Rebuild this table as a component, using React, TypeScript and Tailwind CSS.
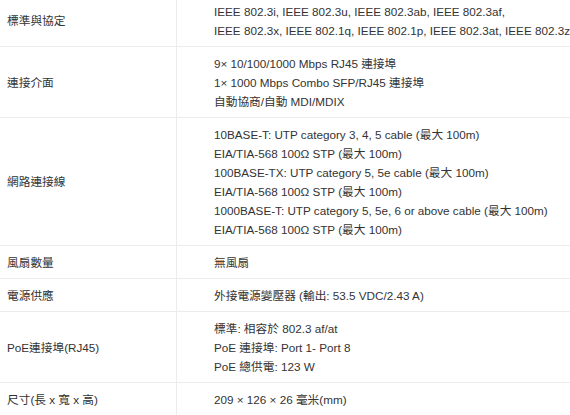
const ROWS = [
  {
    label: '標準與協定',
    lines: [
      'IEEE 802.3i, IEEE 802.3u, IEEE 802.3ab, IEEE 802.3af,',
      'IEEE 802.3x, IEEE 802.1q, IEEE 802.1p, IEEE 802.3at, IEEE 802.3z',
    ],
  },
  {
    label: '連接介面',
    lines: [
      '9× 10/100/1000 Mbps RJ45 連接埠',
      '1× 1000 Mbps Combo SFP/RJ45 連接埠',
      '自動協商/自動 MDI/MDIX',
    ],
  },
  {
    label: '網路連接線',
    lines: [
      '10BASE-T: UTP category 3, 4, 5 cable (最大 100m)',
      'EIA/TIA-568 100Ω STP (最大 100m)',
      '100BASE-TX: UTP category 5, 5e cable (最大 100m)',
      'EIA/TIA-568 100Ω STP (最大 100m)',
      '1000BASE-T: UTP category 5, 5e, 6 or above cable (最大 100m)',
      'EIA/TIA-568 100Ω STP (最大 100m)',
    ],
  },
  { label: '風扇數量', lines: ['無風扇'] },
  { label: '電源供應', lines: ['外接電源變壓器 (輸出: 53.5 VDC/2.43 A)'] },
  {
    label: 'PoE連接埠(RJ45)',
    lines: ['標準: 相容於 802.3 af/at', 'PoE 連接埠: Port 1- Port 8', 'PoE 總供電: 123 W'],
  },
  { label: '尺寸(長 x 寬 x 高)', lines: ['209 × 126 × 26 毫米(mm)'] },
]

export default function App() {
  return (
    <div className="h-[415px] w-[570px] overflow-hidden bg-white">
      <div
        className="-mt-[5px] w-[640px] text-[11.7px] leading-[19px] text-[#333]"
        style={{ fontFamily: '"Liberation Sans", Arial, "Noto Sans CJK TC", sans-serif' }}
      >
        {ROWS.map((row) => (
          <div key={row.label} className="flex border-b border-[#ececec]">
            <div className="flex w-[177px] shrink-0 items-center border-r border-[#ececec] pl-[7px]">
              {row.label}
            </div>
            <div className="flex-1 whitespace-nowrap pb-[6px] pl-[37px] pt-[7px]">
              {row.lines.map((l) => (
                <div key={l}>{l}</div>
              ))}
            </div>
          </div>
        ))}
      </div>
    </div>
  )
}
